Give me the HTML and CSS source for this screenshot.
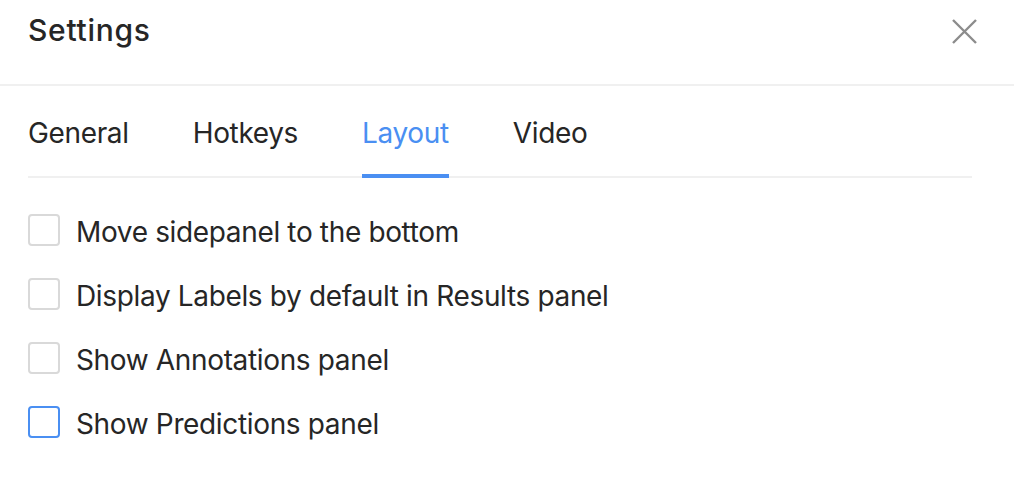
FILE: index.html
```html
<!DOCTYPE html>
<html lang="en">
<head>
<meta charset="utf-8">
<title>Settings</title>
<link rel="stylesheet" href="styles.css">
</head>
<body>
<div class="modal">
  <div class="modal-header">
    <div class="modal-title">Settings</div>
    <button class="close" aria-label="Close">
      <svg width="25" height="25" viewBox="0 0 25 25"><path d="M1 1 L24 24 M24 1 L1 24" stroke="#8c8c8c" stroke-width="2.4" fill="none"/></svg>
    </button>
  </div>
  <div class="modal-body">
    <div class="tabs">
      <div class="tab">General</div>
      <div class="tab">Hotkeys</div>
      <div class="tab active">Layout</div>
      <div class="tab">Video</div>
    </div>
    <div class="options">
      <label class="option"><span class="box"></span><span class="label">Move sidepanel to the bottom</span></label>
      <label class="option"><span class="box"></span><span class="label">Display Labels by default in Results panel</span></label>
      <label class="option"><span class="box"></span><span class="label">Show Annotations panel</span></label>
      <label class="option"><span class="box focus"></span><span class="label">Show Predictions panel</span></label>
    </div>
  </div>
</div>
</body>
</html>
```

FILE: styles.css
```css
html, body {
  margin: 0;
  padding: 0;
  background: #ffffff;
}
body {
  font-family: Inter, "Liberation Sans", sans-serif;
  color: #262626;
  width: 1014px;
  height: 492px;
  overflow: hidden;
}
.modal {
  width: 1014px;
}
.modal-header {
  display: flex;
  justify-content: space-between;
  align-items: flex-start;
  height: 86px;
  box-sizing: border-box;
  padding: 10px 37px 0 28px;
  border-bottom: 2px solid #f0f0f0;
}
.modal-title {
  font-size: 30px;
  line-height: 40px;
  font-weight: 500;
  letter-spacing: 0.7px;
  color: #262626;
}
.close {
  border: 0;
  background: transparent;
  padding: 0;
  margin-top: 9px;
  width: 25px;
  height: 25px;
  display: flex;
}
.modal-body {
  padding: 0 42px 0 28px;
}
.tabs {
  display: flex;
  gap: 64px;
  border-bottom: 2px solid #f0f0f0;
}
.tab {
  position: relative;
  font-size: 28px;
  line-height: 44px;
  letter-spacing: -0.35px;
  padding: 25px 0 21px;
  color: #262626;
}
.tab.active {
  color: #4a8ff2;
}
.tab.active::after {
  content: "";
  position: absolute;
  left: 0;
  right: 0;
  bottom: -2px;
  height: 4px;
  background: #4a8ff2;
}
.options {
  display: flex;
  flex-direction: column;
  padding-top: 20px;
}
.option {
  display: flex;
  align-items: center;
  gap: 16px;
  height: 64px;
}
.box {
  width: 32px;
  height: 32px;
  box-sizing: border-box;
  border: 2px solid #d9d9d9;
  border-radius: 4px;
  flex: none;
}
.box.focus {
  border-color: #4a8ff2;
}
.label {
  font-size: 28px;
  line-height: 44px;
  letter-spacing: -0.35px;
  padding-top: 4px;
}
```
